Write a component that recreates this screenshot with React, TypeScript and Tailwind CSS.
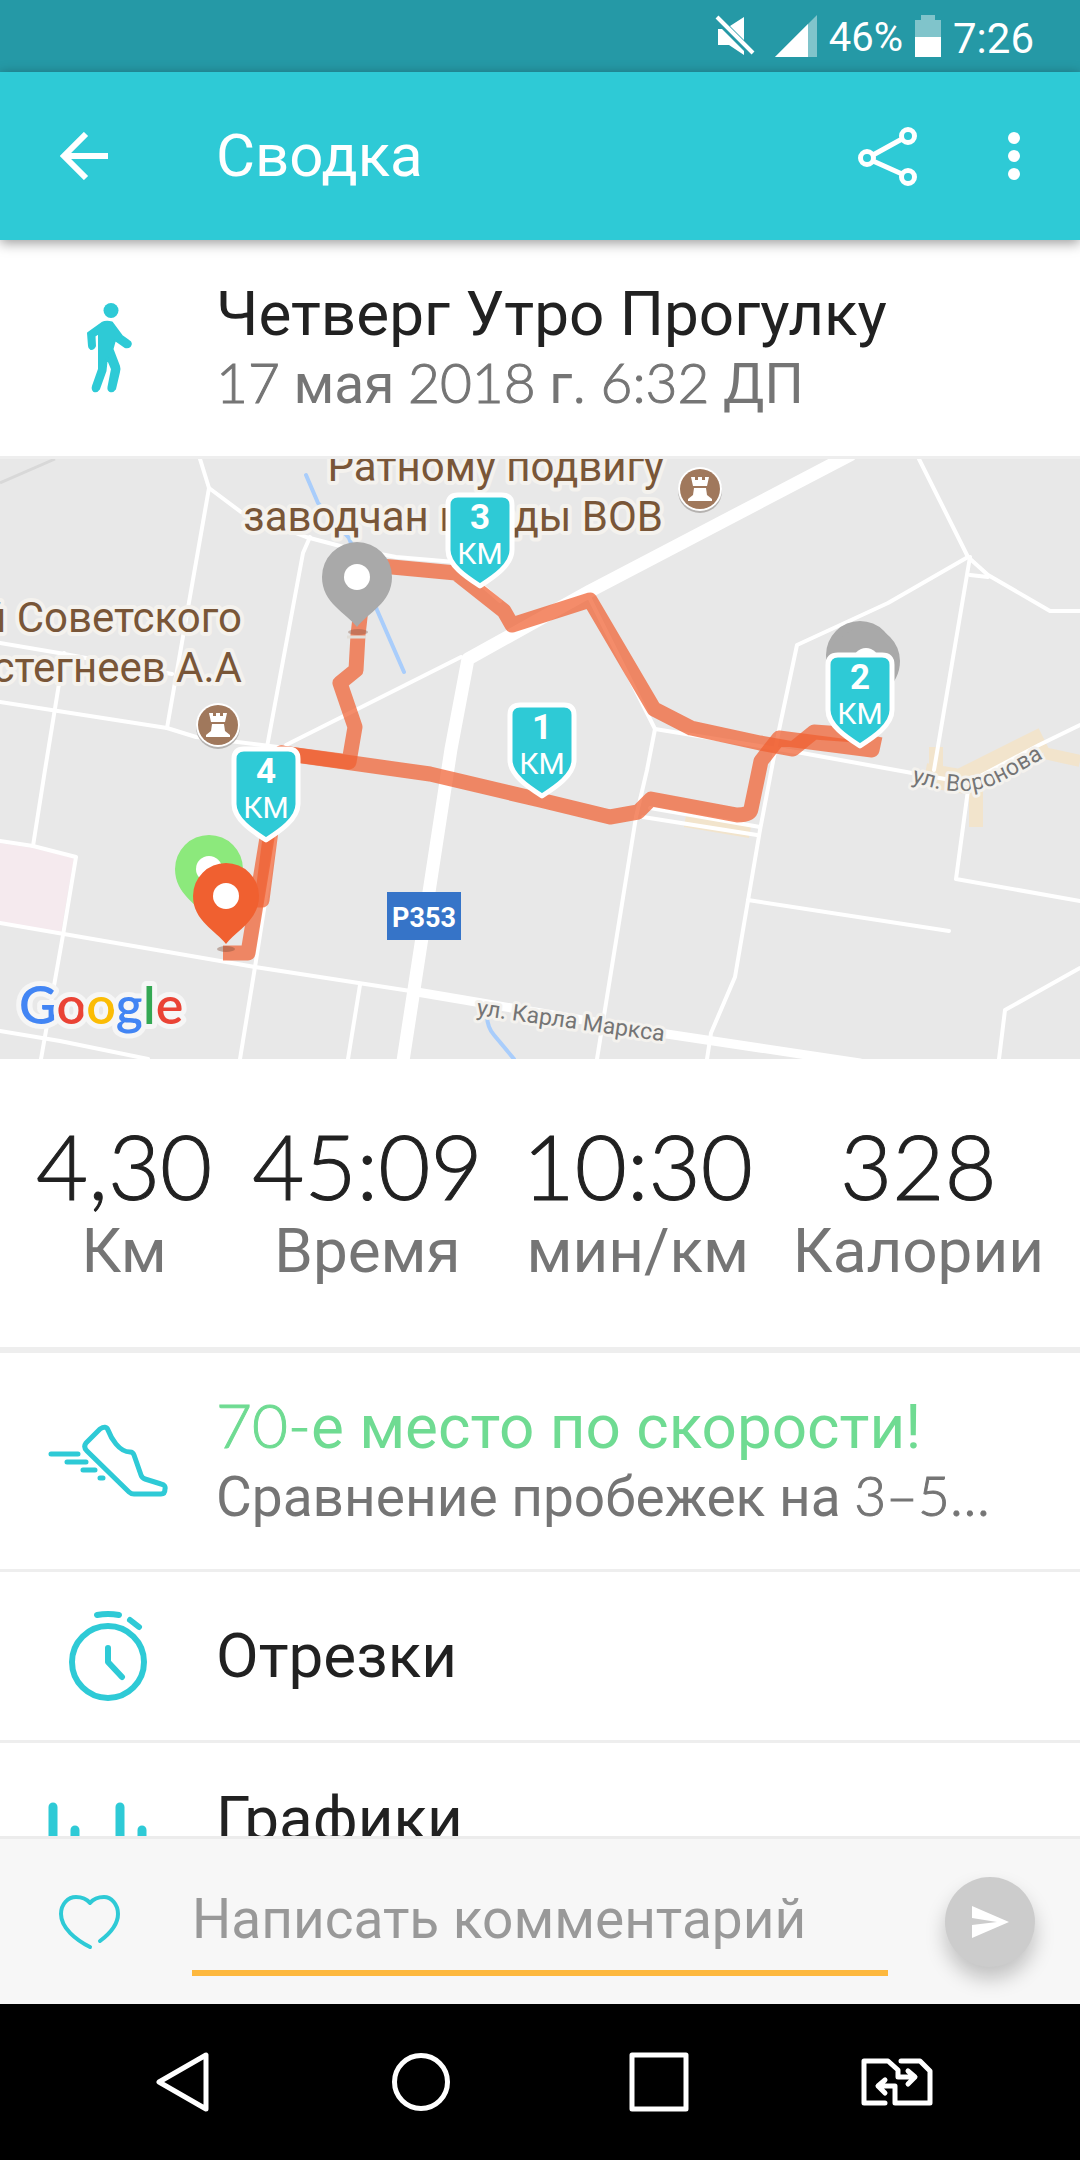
import type { ReactNode } from "react";

type Marker = { x: number; y: number; label: string };

const KM_MARKERS: Marker[] = [
  { x: 542, y: 244, label: "1" },
  { x: 860, y: 194, label: "2" },
  { x: 480, y: 34, label: "3" },
  { x: 266, y: 288, label: "4" },
];

const STATS = [
  { value: "4,30", label: "Км" },
  { value: "45:09", label: "Время" },
  { value: "10:30", label: "мин/км" },
  { value: "328", label: "Калории" },
];

const THIN_ROADS = [
  "M200 0L209 29L167 269",
  "M209 29L241 53L306 78L344 88L396 98L455 103L500 142",
  "M310 78L303 94L267 288L255 330",
  "M0 184L59 194L172 215",
  "M0 243L167 269L196 278L286 289",
  "M64 194L45 311L33 387",
  "M0 382L33 387L76 398L63 476L41 600",
  "M0 464L255 508L417 533",
  "M0 572L60 582L148 600",
  "M275 380L255 508L240 600",
  "M360 526L348 600",
  "M461 198L286 286",
  "M919 0L968 98L988 116L1050 152L1080 152",
  "M968 98L888 144L797 186L779 271L760 371L735 518L711 574L707 600",
  "M970 98L934 311",
  "M970 116L988 118",
  "M590 140L655 270L647 311L636 358L597 600",
  "M655 270L802 294L912 314L967 324",
  "M968 331L956 420L1080 442",
  "M748 441L949 472",
  "M1080 509L1005 551L999 600",
  "M643 358L757 376",
  "M650 349L760 368",
  "M967 324L1039 286L1080 266",
];

// light figures with a hairline stroke, halfway between light and regular
const digits = "font-['Lato',sans-serif] font-light leading-none [-webkit-text-stroke:1px_currentColor]";

function WalkIcon() {
  return (
    <svg width="52" height="92" viewBox="-4 0 52 92" fill="#2ecad6" stroke="#2ecad6" strokeLinejoin="round" strokeLinecap="round">
      <circle cx="25" cy="8.500" r="7.500" stroke="none" />
      <path
        strokeWidth="2"
        d="M2 31L16 21Q20 19 26 20.500L36 34L43 39Q46 41 44 44Q42 46 39 45L29 38L26.500 47L33 64Q34 67 33 70L29 87Q27 90 24 89Q22 88 22.500 85L26 67L21 55L19.500 69L13 87Q11 90 8 89Q6 87 7 84L13 67L13 31L8.500 34L9 44Q8 47 5 47Q3 46 3 44Z"
      />
    </svg>
  );
}

function ShoeIcon() {
  return (
    <svg width="120" height="74" viewBox="0 0 120 74" fill="none" stroke="#2ecad6" strokeWidth="5" strokeLinecap="round" strokeLinejoin="round">
      <path d="M52 5L38 19Q35 23 39 27L81 68Q83 70 86 70H113Q117 70 117 65Q118 61 113 60L97 55Q94 54 93 51L86 31Q85 28 82 28C71 28 63 14 60 6Q58 1 52 5Z" />
      <path d="M3 30H30M19 38H38M35 46H47M52 54H55" />
    </svg>
  );
}

function StopwatchIcon() {
  return (
    <svg width="78" height="92" viewBox="0 0 78 92" fill="none" stroke="#2ecad6" strokeWidth="6" strokeLinecap="round" strokeLinejoin="round">
      <circle cx="39" cy="52" r="36" />
      <path d="M28 5Q39 3 50 5M61 10L70 17M39 38V52L53 67" />
    </svg>
  );
}

function ChartIcon() {
  return (
    <svg width="120" height="98" viewBox="0 0 120 98" fill="none" stroke="#2ecad6" strokeWidth="9" strokeLinecap="round">
      <path d="M5 5V93M27 28V93M49 50V93M72 5V93M94 28V93M115 50V93" />
    </svg>
  );
}

function Pin({ x, y, r, tip, color }: { x: number; y: number; r: number; tip: number; color: string }) {
  const d = `M0 ${tip}C${-r * 0.3} ${tip - r * 0.4} ${-r} ${r * 0.75} ${-r} 0A${r} ${r} 0 0 1 ${r} 0C${r} ${r * 0.75} ${r * 0.3} ${tip - r * 0.4} 0 ${tip}Z`;
  return (
    <g transform={`translate(${x} ${y})`}>
      <path d={d} fill={color} />
      <circle r="13" fill="#fff" />
    </g>
  );
}

function Castle({ x, y }: { x: number; y: number }) {
  return (
    <g transform={`translate(${x} ${y})`}>
      <circle cy="2" r="22" fill="#b5b2b0" />
      <circle r="22" fill="#fff" />
      <circle r="20" fill="#a0785c" />
      <path
        fill="#fff"
        d="M-9 -12H-5V-9H-2V-12H2V-9H5V-12H9L7 -3H-7ZM-6 -1H6L7 6L12 10V12H-12V10L-7 6Z"
      />
    </g>
  );
}

function KmMarker({ x, y, label }: Marker) {
  return (
    <g transform={`translate(${x} ${y})`} textAnchor="middle" fill="#fff">
      <path
        d="M-22 2H22Q32 2 32 12V57C32 72 14 84 0 93C-14 84 -32 72 -32 57V12Q-32 2 -22 2Z"
        fill="#2ecad6"
        stroke="#fff"
        strokeWidth="5"
        strokeLinejoin="round"
      />
      <text y="36" fontSize="35" fontWeight="700">{label}</text>
      <text y="71" fontSize="30">КМ</text>
    </g>
  );
}

function RouteMap() {
  return (
    <svg
      role="img"
      aria-label="Маршрут прогулки"
      viewBox="0 0 1080 600"
      preserveAspectRatio="xMidYMid slice"
      className="block h-[600px] w-full shrink-0 bg-[#e8e8e8] font-['Roboto',sans-serif]"
    >
      <path d="M0 384L33 389L74 399L61 474L0 464Z" fill="#f5eaee" />
      <path d="M0 24L55 0" stroke="#d8d8d8" strokeWidth="3" />
      <g fill="none" stroke="#f2e4cc">
        <path d="M936 288V322M976 324V368" strokeWidth="14" />
        <path d="M925 316L960 322L1044 280" strokeWidth="24" />
        <path d="M1044 294L1080 302M685 362L750 373" strokeWidth="12" />
      </g>
      <g fill="none" stroke="#a9cdfb" strokeWidth="4" strokeLinecap="round">
        <path d="M306 16L318 44L349 79L377 151L404 213" />
        <path d="M487 556Q487 568 494 576L514 600" />
      </g>
      <g fill="none" stroke="#fff" strokeWidth="4" strokeLinejoin="round" strokeLinecap="round">
        {THIN_ROADS.map((d) => (
          <path key={d} d={d} />
        ))}
        <path d="M417 533L482 544L660 574L860 604" strokeWidth="9" />
        <path d="M850 -4L590 132L468 200L451 290L403 602" strokeWidth="13" />
      </g>

      {/* street names */}
      <g fontSize="23" fill="#757575" stroke="#f4f2ee" strokeWidth="6" strokeLinejoin="round" paintOrder="stroke">
        <path id="voronova" d="M911 323C950 334 975 338 1010 318L1070 284" fill="none" stroke="none" />
        <text>
          <textPath href="#voronova">ул. Воронова</textPath>
        </text>
        <text transform="translate(476 556) rotate(8)">ул. Карла Маркса</text>
      </g>

      <g fontSize="42" fill="#795638" stroke="#f4f2ee" strokeWidth="8" strokeLinejoin="round" paintOrder="stroke" textAnchor="end">
        <text x="664" y="22">Ратному подвигу</text>
        <text x="663" y="72">заводчан в годы ВОВ</text>
        <text x="242" y="173">й Советского</text>
        <text x="242" y="223">стегнеев А.А</text>
      </g>
      <Castle x={700} y={30} />
      <Castle x={218} y={266} />

      <rect x="387" y="433" width="74" height="48" fill="#3674c8" />
      <text x="424" y="468" fontSize="27" fontWeight="700" fill="#fff" textAnchor="middle">Р353</text>

      {/* there and back, drawn apart so the shared street comes out darker */}
      <g fill="none" stroke="#f05f30" strokeWidth="15" strokeLinejoin="round">
        <path opacity=".72" d="M210 441H262L281 294L430 315L540 341L610 358L638 353L651 340L737 356Q750 356 751 350L761 302L779 279L872 291L875 277" />
        <path opacity=".72" d="M870 277L814 273L793 290L760 284L691 269L654 250L590 141L512 166L504 152L456 114L392 108L366 106L358 176L356 211L340 224L355 268L349 303L281 294L248 494H223" />
      </g>
      <path d="M347 178H366" stroke="#e2ded8" strokeWidth="3" />
      <ellipse cx="358" cy="173" rx="10" ry="3" fill="#8a5a48" opacity=".4" />
      <ellipse cx="226" cy="490" rx="9" ry="3" fill="#7a4a38" opacity=".4" />

      <Pin x={357} y={118} r={35} tip={50} color="#a9a9a9" />
      <Pin x={860} y={196} r={34} tip={50} color="#a9a9a9" />
      <Pin x={866} y={202} r={34} tip={50} color="#a9a9a9" />
      <Pin x={209} y={410} r={34} tip={50} color="#8ce97c" />
      <Pin x={226} y={437} r={33} tip={48} color="#f06030" />
      {KM_MARKERS.map((m) => (
        <KmMarker key={m.label} {...m} />
      ))}

      <text
        x="19"
        y="565"
        fontSize="52"
        fontWeight="600"
        className="font-['Lato',sans-serif]"
        stroke="#f6f6f6"
        strokeWidth="10"
        strokeLinejoin="round"
        paintOrder="stroke"
      >
        <tspan fill="#4285f4">G</tspan>
        <tspan fill="#ea4335">o</tspan>
        <tspan fill="#fbbc05">o</tspan>
        <tspan fill="#4285f4">g</tspan>
        <tspan fill="#34a853">l</tspan>
        <tspan fill="#ea4335">e</tspan>
      </text>
    </svg>
  );
}

function Row({ icon, children, className = "" }: { icon: ReactNode; children: ReactNode; className?: string }) {
  return (
    <div className={`flex shrink-0 items-center border-b-[3px] border-[#eeeeee] ${className}`}>
      <div className="flex w-[216px] shrink-0 justify-center">{icon}</div>
      <div className="min-w-0 flex-1 pr-8">{children}</div>
    </div>
  );
}

function StatusBar() {
  return (
    <div className="flex h-[72px] shrink-0 items-center justify-end bg-[#2599a6] pr-[46px] text-white">
      <svg width="40" height="42" viewBox="0 0 40 42" fill="#fff" className="mr-5">
        <path d="M15 11L29 2V25ZM3 14H7L29 36V40L14 30H3Z" />
        <path d="M2 2L38 38" stroke="#fff" strokeWidth="4" />
      </svg>
      <svg width="42" height="42" viewBox="0 0 42 42" className="mr-3">
        <path d="M42 0V42H0Z" fill="#fff" opacity=".42" />
        <path d="M33 9V42H0Z" fill="#fff" />
      </svg>
      <span className="mr-3 pt-1 text-[40px]">46%</span>
      <svg width="26" height="42" viewBox="0 0 26 42" className="mr-3">
        <path d="M6 0H20V5H26V22H0V5H6Z" fill="#fff" opacity=".42" />
        <path d="M0 22H26V42H0Z" fill="#fff" />
      </svg>
      <span className="pt-1 text-[42px]">7:26</span>
    </div>
  );
}

function AppBar() {
  return (
    <header className="relative z-10 flex h-[168px] shrink-0 items-center bg-[#2ecad6] text-white shadow-[0_3px_12px_rgba(0,0,0,0.4)]">
      <div className="w-[216px] shrink-0 pl-[60px]">
        <button aria-label="Назад" className="block">
          <svg width="48" height="48" viewBox="0 0 48 48" fill="none" stroke="currentColor" strokeWidth="6">
            <path d="M26 2L4 24L26 46M4 24H48" />
          </svg>
        </button>
      </div>
      <h1 className="flex-1 text-[60px] leading-[72px]">Сводка</h1>
      <button aria-label="Поделиться">
        <svg width="60" height="60" viewBox="0 0 60 60" fill="none" stroke="currentColor" strokeWidth="5">
          <circle cx="9" cy="32" r="6.500" />
          <circle cx="50" cy="10" r="6.500" />
          <circle cx="50" cy="51" r="6.500" />
          <path d="M15 29L44 13M15 35L44 48" />
        </svg>
      </button>
      <button aria-label="Ещё" className="mr-[60px] ml-[90px]">
        <svg width="12" height="48" viewBox="0 0 12 48" fill="currentColor">
          <circle cx="6" cy="6" r="6" />
          <circle cx="6" cy="24" r="6" />
          <circle cx="6" cy="42" r="6" />
        </svg>
      </button>
    </header>
  );
}

function CommentBar() {
  return (
    <form className="flex h-[168px] shrink-0 items-center border-t-[3px] border-[#ececec] bg-[#f7f7f7]">
      <button type="button" aria-label="Нравится" className="flex w-[180px] shrink-0 justify-center">
        <svg width="64" height="58" viewBox="0 0 64 58" fill="none" stroke="#2ecad6" strokeWidth="4" strokeLinecap="round" strokeLinejoin="round">
          <path d="M42 48C54 39 60 31 60 21C60 11 53 4 46 4Q37 4 32 10Q27 4 18 4C10 4 3 11 3 21C3 35 18 47 32 54" />
        </svg>
      </button>
      <input
        type="text"
        aria-label="Комментарий"
        placeholder="Написать комментарий"
        className="ml-3 h-[108px] min-w-0 flex-1 border-b-[6px] border-[#fdb83e] bg-transparent text-[55px] outline-none placeholder:text-[#999999]"
      />
      <button
        type="submit"
        aria-label="Отправить"
        className="mr-[45px] ml-[57px] flex size-[90px] shrink-0 items-center justify-center rounded-full bg-[#cccccc] shadow-[0_12px_20px_rgba(0,0,0,0.22)]"
      >
        <svg width="38" height="34" viewBox="0 0 38 34" fill="#fff">
          <path d="M1 1L38 17L1 33V20L26 17L1 13Z" />
        </svg>
      </button>
    </form>
  );
}

function NavBar() {
  const item = "flex flex-1 justify-center";
  return (
    <nav className="flex h-[156px] shrink-0 items-center bg-black px-16 text-white">
      <button aria-label="Назад" className={item}>
        <svg width="60" height="60" viewBox="0 0 60 60" fill="none" stroke="currentColor" strokeWidth="5" strokeLinejoin="round">
          <path d="M53 3V57L6 30Z" />
        </svg>
      </button>
      <button aria-label="Домой" className={item}>
        <svg width="60" height="60" viewBox="0 0 60 60" fill="none" stroke="currentColor" strokeWidth="5">
          <circle cx="30" cy="30" r="26.500" />
        </svg>
      </button>
      <button aria-label="Недавние" className={item}>
        <svg width="60" height="60" viewBox="0 0 60 60" fill="none" stroke="currentColor" strokeWidth="5" strokeLinejoin="round">
          <path d="M3 3H57V57H3Z" />
        </svg>
      </button>
      <button aria-label="Сменить SIM-карту" className={item}>
        <svg width="72" height="48" viewBox="0 0 72 48" fill="none" stroke="currentColor" strokeWidth="5" strokeLinecap="round" strokeLinejoin="round">
          <path d="M24 45H3V3H27L37 12V19H53M47 13L54 19L47 26" />
          <path d="M40 3H59L69 13V45H34V28H18M24 22L17 28L24 35" />
        </svg>
      </button>
    </nav>
  );
}

export default function App() {
  return (
    <div className="flex h-screen flex-col overflow-hidden bg-white font-['Roboto',sans-serif] text-[#212121]">
      <StatusBar />
      <AppBar />
      <main className="flex min-h-0 flex-1 flex-col overflow-hidden">
        <Row icon={<WalkIcon />} className="h-[219px]">
          <h2 className="text-[62px] leading-[72px]">Четверг Утро Прогулку</h2>
          <p className="text-[55px] leading-[68px] text-[#757575]">
            <span className={digits}>17</span> мая <span className={digits}>2018</span> г.{" "}
            <span className={digits}>6:32</span> ДП
          </p>
        </Row>
        <RouteMap />
        <dl className="flex h-[294px] shrink-0 justify-between border-b-[6px] border-[#eeeeee] px-9 pt-14">
          {STATS.map((s) => (
            <div key={s.label} className="flex flex-col-reverse justify-end text-center">
              <dt className="text-[62px] leading-[72px] text-[#757575]">{s.label}</dt>
              <dd className="font-['Lato',sans-serif] text-[90px] leading-[100px] font-light [-webkit-text-stroke:1px_currentColor]">
                {s.value}
              </dd>
            </div>
          ))}
        </dl>
        <Row icon={<ShoeIcon />} className="h-[219px]">
          <h2 className="text-[62px] leading-[72px] text-[#6fdb92]">
            <span className={digits}>70-</span>е место по скорости!
          </h2>
          <p className="text-[55px] leading-[68px] text-[#757575]">
            Сравнение пробежек на <span className={digits}>3–5…</span>
          </p>
        </Row>
        <Row icon={<StopwatchIcon />} className="h-[171px]">
          <h2 className="text-[62px] leading-[72px]">Отрезки</h2>
        </Row>
        <Row icon={<ChartIcon />} className="h-[219px]">
          <h2 className="mb-16 text-[62px] leading-[72px]">Графики</h2>
        </Row>
      </main>
      <CommentBar />
      <NavBar />
    </div>
  );
}
